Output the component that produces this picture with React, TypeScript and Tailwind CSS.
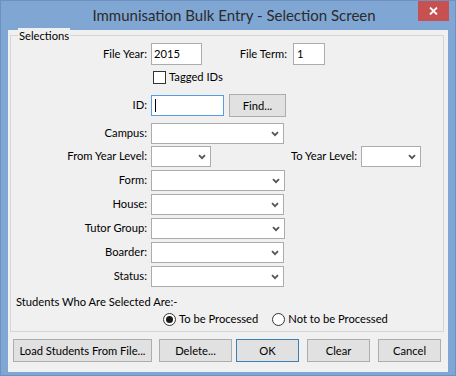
import React from "react"

const font = { fontFamily: "Lato, 'Liberation Sans', sans-serif" }

function Chevron() {
  return (
    <svg width="8" height="6" viewBox="0 0 8 6" className="shrink-0">
      <path d="M1 1.2 L4 4.2 L7 1.2" fill="none" stroke="#555" strokeWidth="1.8" />
    </svg>
  )
}

function Combo({ w }: { w: string }) {
  return (
    <div className={`${w} h-[21px] bg-white border border-[#acacac] flex items-center justify-end pr-[4px]`}>
      <Chevron />
    </div>
  )
}

function Label({ children }: { children: React.ReactNode }) {
  return <div className="w-[137px] text-right pr-[1px] shrink-0">{children}</div>
}

function ComboRow({ label, w, mt }: { label: string; w: string; mt: string }) {
  return (
    <div className={`flex items-center ${mt}`}>
      <Label>{label}</Label>
      <div className="ml-[3px]">
        <Combo w={w} />
      </div>
    </div>
  )
}

function Btn({ children, w, ml, isDefault }: { children: React.ReactNode; w: string; ml: string; isDefault?: boolean }) {
  return (
    <button
      className={`${w} ${ml} h-[23px] bg-[#e1e1e1] border ${isDefault ? "border-[#3c7fb1]" : "border-[#adadad]"} text-[11.2px] text-black leading-none flex items-center justify-center`}
    >
      {children}
    </button>
  )
}

function Radio({ checked }: { checked?: boolean }) {
  return (
    <div className="w-[13px] h-[13px] rounded-full border border-[#333] bg-white flex items-center justify-center shrink-0">
      {checked && <div className="w-[7px] h-[7px] rounded-full bg-[#1a1a1a]" />}
    </div>
  )
}

export default function App() {
  return (
    <div className="w-[456px] h-[376px] bg-[#80a6d4] border border-[#6d92c2] flex flex-col text-[11.2px] text-black" style={font}>
      {/* title bar */}
      <div className="h-[29px] flex shrink-0">
        <div className="flex-1 pl-[49px] text-center text-[15px] leading-[29px] text-[#2b2b2b]">
          Immunisation Bulk Entry - Selection Screen
        </div>
        <div className="w-[31px] h-[20px] bg-[#c75050] mr-[6px] flex items-center justify-center">
          <svg width="9" height="8" viewBox="0 0 9 8">
            <path d="M1 0.5 L8 7.5 M8 0.5 L1 7.5" stroke="#fff" strokeWidth="1.8" />
          </svg>
        </div>
      </div>

      {/* client area */}
      <div className="flex-1 mx-[7px] mb-[3px] bg-[#f0f0f0] flex flex-col">
        <div className="relative mt-[5px] ml-[2px] mr-[4px] h-[297px] border border-[#d5d5d5] flex flex-col">
          <div className="absolute left-[7px] top-[-8px] px-[1px] bg-[#f0f0f0] leading-[15px]">Selections</div>

          {/* file year / term */}
          <div className="flex items-center mt-[7px] h-[22px]">
            <Label>File Year:</Label>
            <div className="ml-[3px] w-[51px] h-[22px] bg-white border border-[#acacac] pl-[2px] flex items-center">2015</div>
            <div className="w-[90px] text-right pr-[5px]">File Term:</div>
            <div className="ml-[1px] w-[32px] h-[22px] bg-white border border-[#acacac] pl-[3px] flex items-center">1</div>
          </div>

          {/* tagged ids */}
          <div className="flex items-center mt-[6px] h-[13px] ml-[142px]">
            <div className="w-[13px] h-[13px] border border-[#333] bg-white" />
            <span className="ml-[3px]">Tagged IDs</span>
          </div>

          {/* id */}
          <div className="flex items-center mt-[10px] h-[23px]">
            <Label>ID:</Label>
            <div className="ml-[3px] w-[73px] h-[21px] bg-white border border-[#569de5] pl-[3px] flex items-center">
              <div className="w-[1px] h-[13px] bg-black" />
            </div>
            <Btn w="w-[57px]" ml="ml-[5px]">Find...</Btn>
          </div>

          <ComboRow label="Campus:" w="w-[133px]" mt="mt-[6px]" />

          <div className="flex items-center mt-[2px]">
            <Label>From Year Level:</Label>
            <div className="ml-[3px]">
              <Combo w="w-[60px]" />
            </div>
            <div className="w-[150px] text-right pr-[4px]">To Year Level:</div>
            <Combo w="w-[60px]" />
          </div>

          <ComboRow label="Form:" w="w-[134px]" mt="mt-[3px]" />
          <ComboRow label="House:" w="w-[133px]" mt="mt-[3px]" />
          <ComboRow label="Tutor Group:" w="w-[134px]" mt="mt-[3px]" />
          <ComboRow label="Boarder:" w="w-[133px]" mt="mt-[3px]" />
          <ComboRow label="Status:" w="w-[133px]" mt="mt-[3px]" />

          <div className="mt-[7px] ml-[5px] leading-[16px]">Students Who Are Selected Are:-</div>

          <div className="flex items-center mt-[3px] ml-[152px] h-[13px]">
            <Radio checked />
            <span className="ml-[3px]">To be Processed</span>
            <div className="ml-[14px]">
              <Radio />
            </div>
            <span className="ml-[3px]">Not to be Processed</span>
          </div>
        </div>

        {/* buttons */}
        <div className="flex mt-[7px]">
          <Btn w="w-[139px]" ml="ml-[5px]">Load Students From File...</Btn>
          <Btn w="w-[73px]" ml="ml-[7px]">Delete...</Btn>
          <Btn w="w-[63px]" ml="ml-[4px]" isDefault>OK</Btn>
          <Btn w="w-[63px]" ml="ml-[8px]">Clear</Btn>
          <Btn w="w-[63px]" ml="ml-[8px]">Cancel</Btn>
        </div>
      </div>
    </div>
  )
}
